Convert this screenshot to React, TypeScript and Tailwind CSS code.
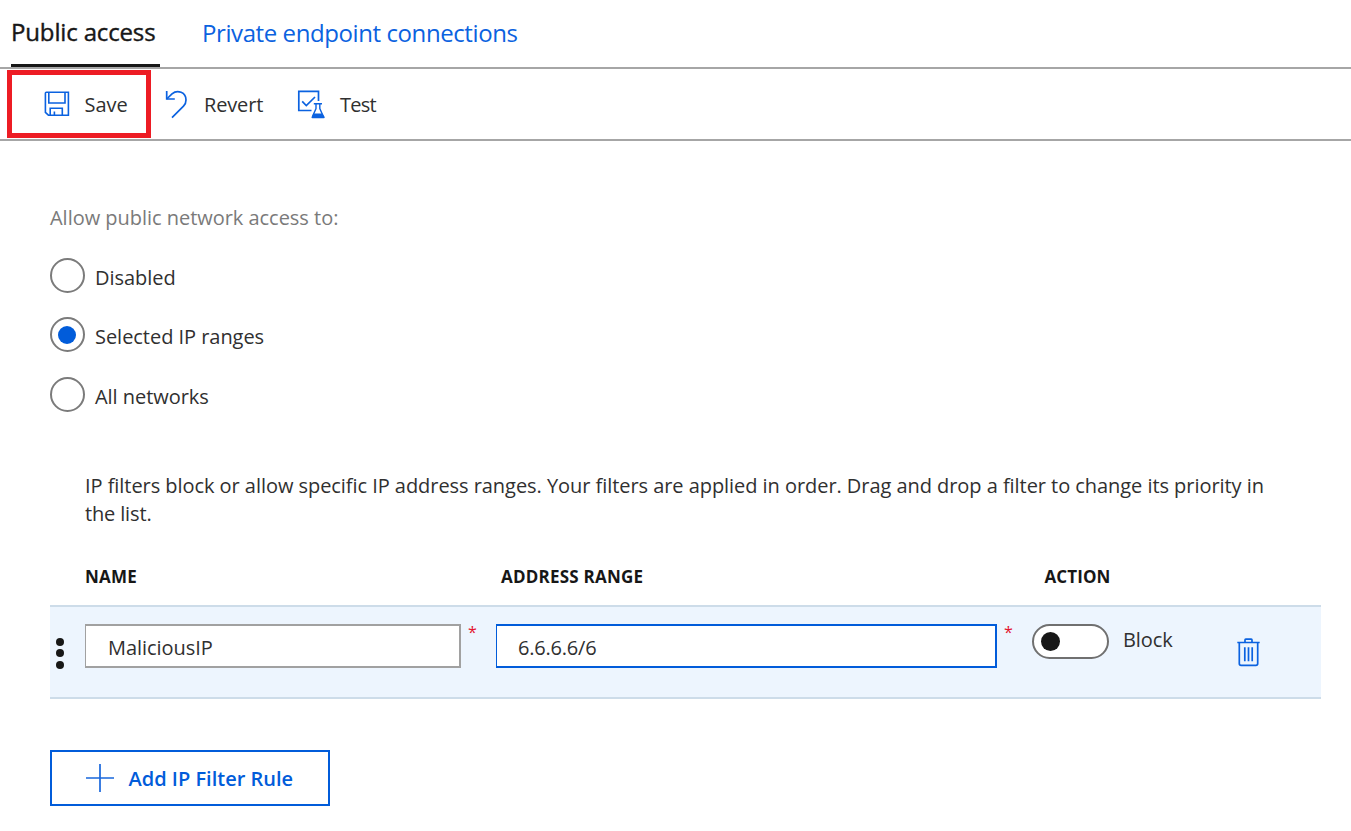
function SaveIcon() {
  return (
    <svg width="26" height="26" viewBox="0 0 26 26" fill="none" stroke="#0b62e0" strokeWidth="1.6" className="shrink-0">
      <path d="M1.400 2.200Q1.400 1.300 2.300 1.300H24.400V24.200H4.400L1.400 21.400Z" />
      <path d="M4.800 1.300V12H21V1.300" />
      <path d="M6.200 24.200V17.300H18.300V24.200M10.400 24V20.500" />
    </svg>
  );
}

function RevertIcon() {
  return (
    <svg width="24" height="29" viewBox="0 0 24 29" fill="none" stroke="#0b62e0" strokeWidth="1.7" className="shrink-0">
      <path d="M1.700 1V9H9.800" />
      <path d="M1.700 9L7 3.800C12.500 -0.700 21 2.300 21 10C21 12.500 20.200 14.500 18.500 16.200L7 27.700" />
    </svg>
  );
}

function TestIcon() {
  return (
    <svg width="29" height="29" viewBox="0 0 29 29" fill="none" stroke="#0b62e0" strokeWidth="1.7" className="shrink-0">
      <path d="M14.500 20.500H1.800V1.300H21.500V11" />
      <path d="M5.200 11.300L9.300 15.500L18 7" />
      <path d="M16.800 13.700H25M19 14V18.500L15.700 26M22.800 14V18.500L26.100 26" strokeWidth="1.400" />
      <path d="M16.500 23.500H25.500L27.700 27Q28 28.300 26.700 28.300H15.500Q14.200 28.300 14.500 27Z" fill="#0b62e0" stroke="none" />
    </svg>
  );
}

function TrashIcon() {
  return (
    <svg width="23" height="29" viewBox="0 0 23 29" fill="none" stroke="#0b62e0" strokeWidth="1.700" className="shrink-0">
      <path d="M0.300 4.500H22.700M8 4.300V2Q8 1.200 8.800 1.200H14.200Q15 1.200 15 2V4.300" />
      <path d="M2.300 4.800V25.600Q2.300 27.400 4.100 27.400H18.900Q20.700 27.400 20.700 25.600V4.800" />
      <path d="M7.800 9.300V23.300M11.500 9.300V23.300M15.200 9.300V23.300" />
    </svg>
  );
}

function Radio({ label, checked }: { label: string; checked?: boolean }) {
  return (
    <div className="flex h-[35px] items-center">
      <span className="flex size-[35px] items-center rounded-full border-2 border-[#7b7b7b] pl-[6px]">
        {checked && <span className="mt-px size-[18px] rounded-full bg-[#015cda]" />}
      </span>
      <span className="ml-[10px] mt-[4px] whitespace-nowrap tracking-[-0.04px]">{label}</span>
    </div>
  );
}

function Required() {
  return <span className="ml-[7px] w-[28px] text-[16px] leading-[16px] text-[#e3122c]">*</span>;
}

function Dot() {
  return <i className="size-2 rounded-full bg-[#171717]" />;
}

export default function App() {
  return (
    <div className="h-[831px] w-[1351px] overflow-hidden bg-white font-['Open_Sans',sans-serif] text-[20px] leading-[28px] text-[#303030]">
      <nav className="flex h-[69px] items-stretch border-b-2 border-[#a6a6a6] pl-[11px] text-[24px]">
        <div className="w-[149px] whitespace-nowrap border-b-[3px] border-[#171717] pt-[18px] tracking-[-0.15px] text-[#171717] [-webkit-text-stroke:0.4px_#171717]">
          Public access
        </div>
        <div className="ml-[42px] whitespace-nowrap pt-[19px] tracking-[-0.41px] text-[#0b62e0]">Private endpoint connections</div>
      </nav>
      <div className="flex h-[72px] items-start border-b-2 border-[#a6a6a6] pl-[7px] pt-px">
        <button className="flex h-[68px] w-[144px] items-center border-[5px] border-[#ed1c24] pl-8">
          <SaveIcon />
          <span className="ml-[14.5px] mt-[2px]">Save</span>
        </button>
        <button className="ml-[14px] flex h-[68px] w-[132px] items-center">
          <RevertIcon />
          <span className="ml-[15px] mt-[2px] tracking-[-0.15px]">Revert</span>
        </button>
        <button className="flex h-[68px] items-center">
          <TestIcon />
          <span className="ml-[14px] mt-[2px] tracking-[-0.75px]">Test</span>
        </button>
      </div>
      <main className="pl-[50px] pr-[30px] pt-[63px]">
        <p className="tracking-[-0.03px] text-[#7a7a7a]">Allow public network access to:</p>
        <div className="mt-[26px] flex flex-col">
          <Radio label="Disabled" />
          <div className="mb-[25px] mt-6">
            <Radio label="Selected IP ranges" checked />
          </div>
          <Radio label="All networks" />
        </div>
        <p className="mt-[60px] whitespace-nowrap pl-[35px] tracking-[-0.052px]">
          IP filters block or allow specific IP address ranges. Your filters are applied in order. Drag and drop a filter to change its priority in
          <br />
          <span className="tracking-[-0.15px]">the list.</span>
        </p>
        <div className="mt-[35px] flex h-[42px] pl-[35px] text-[17px] font-bold text-[#171717]">
          <div className="w-[416px] tracking-[0.2px]">NAME</div>
          <div className="w-[543.5px] tracking-[0.22px]">ADDRESS RANGE</div>
          <div className="tracking-[0.1px]">ACTION</div>
        </div>
        <div className="flex h-[94px] items-start border-y-2 border-[#cddce9] bg-[#edf5fe] pt-[17px]">
          <div className="ml-[6px] mt-[13.5px] flex flex-col gap-[3.5px]">
            <Dot />
            <Dot />
            <Dot />
          </div>
          <div className="ml-[21px] h-[44px] w-[376px] border-2 border-l border-[#a1a1a1] bg-white pl-[22px] pt-[8px] tracking-[-0.05px]">MaliciousIP</div>
          <Required />
          <div className="h-[44px] w-[501px] border-2 border-l border-[#015cda] bg-white pl-[21px] pt-[8px] tracking-[-0.2px]">6.6.6.6/6</div>
          <Required />
          <div className="flex h-[35px] w-[77px] items-center rounded-full border-2 border-[#707070] bg-white pl-[6.5px]">
            <i className="size-[19.5px] rounded-full bg-[#171717]" />
          </div>
          <span className="ml-[14px] mt-[2px] w-[114px] tracking-[-0.1px]">Block</span>
          <div className="mt-[14px]">
            <TrashIcon />
          </div>
        </div>
        <button className="mt-[51px] flex h-[56px] w-[280px] items-center border-2 border-[#015cda] pl-[34px] font-semibold text-[#015cda]">
          <svg width="28" height="28" viewBox="0 0 28 28" stroke="#1967dc" strokeWidth="1.7">
            <path d="M0 14H28M14 0V28" />
          </svg>
          <span className="ml-[14.5px] mt-[2px]">Add IP Filter Rule</span>
        </button>
      </main>
    </div>
  );
}
